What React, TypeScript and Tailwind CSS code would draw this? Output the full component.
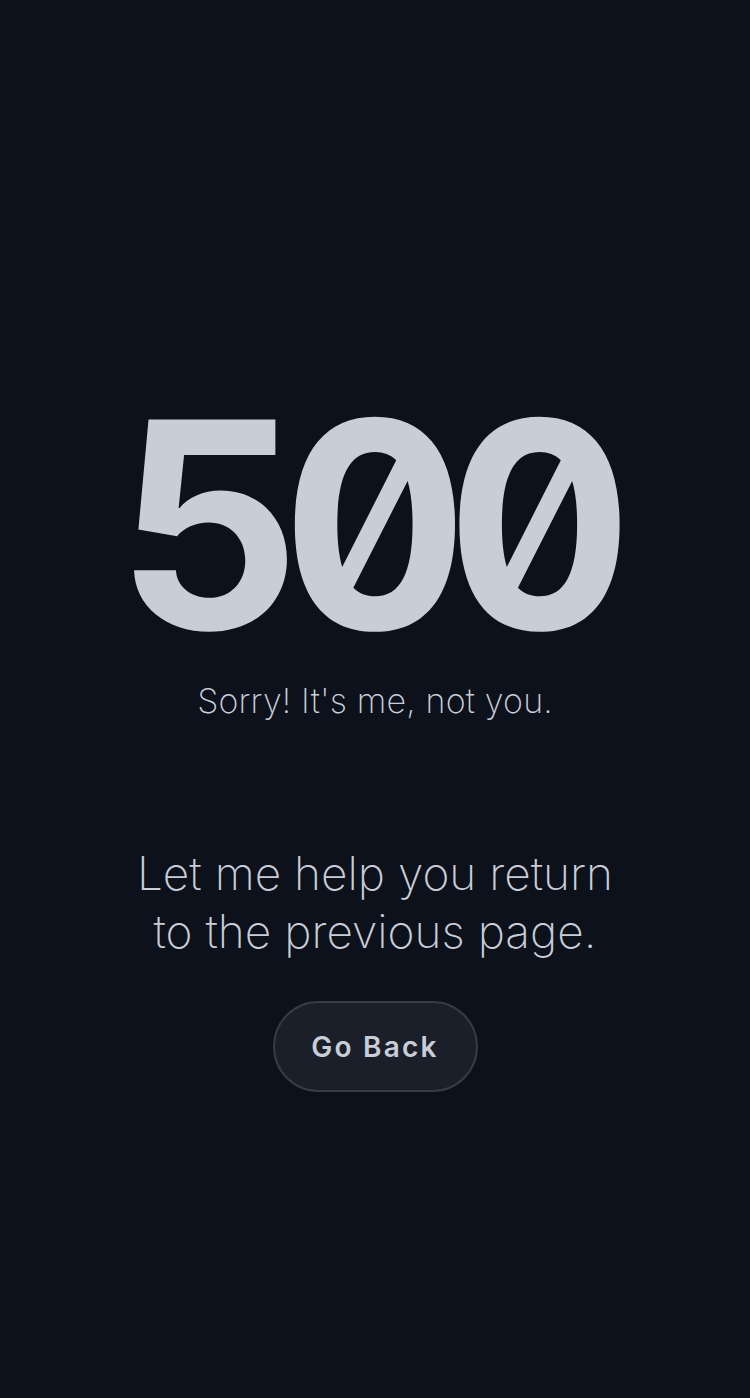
import React from "react";

export default function App() {
  return (
    <div className="min-h-[1398px] w-full bg-[#0c111b] flex flex-col items-center pt-[404px] font-['Inter',sans-serif] antialiased">
      <h1 className="text-[288px] leading-[240px] font-bold text-[#c9cdd7] tracking-[-0.075em] pr-[0.075em] [font-feature-settings:'zero','tnum']">
        500
      </h1>
      <p className="mt-[40px] text-[34px] leading-none font-[180] text-[#c9cdd7] tracking-[0.005em]">
        Sorry! It's me, not you.
      </p>
      <p className="mt-[126px] text-[46px] leading-[58px] font-[180] text-[#c9cdd7] text-center">
        Let me help you return
        <br />
        to the previous page.
      </p>
      <button className="mt-[41px] w-[205px] h-[91px] rounded-full bg-[#1a1f29] border-2 border-[#363b46] text-[#c9cdd7] text-[28px] font-semibold tracking-[0.08em]">
        Go Back
      </button>
    </div>
  );
}
